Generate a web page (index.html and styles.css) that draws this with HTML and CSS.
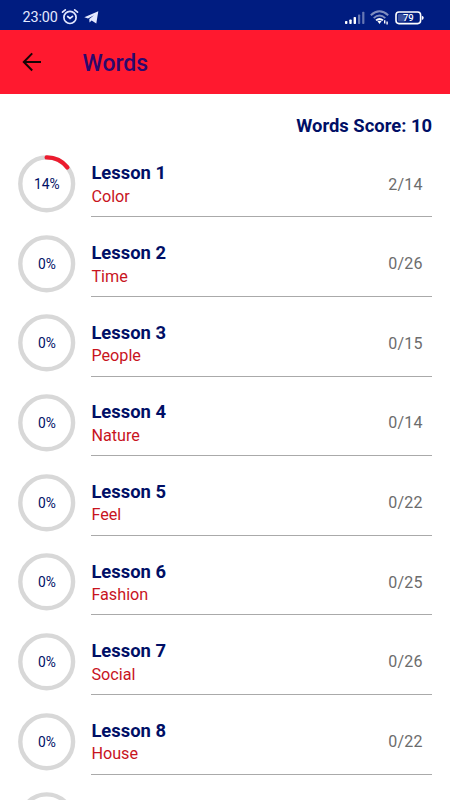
FILE: index.html
```
<!DOCTYPE html>
<html lang="en">
<head>
<meta charset="utf-8">
<title>Words</title>
<link rel="stylesheet" href="styles.css">
</head>
<body>
<div class="status">
  <span class="time">23:00</span>
  <svg class="alarm" width="18" height="18" viewBox="0 0 18 18" fill="none" stroke="#e4e9ff" stroke-width="1.7" stroke-linecap="round"><circle cx="9" cy="9.4" r="6.1"/><path d="M1.5 4.2 4.3 1.8M16.5 4.2 13.7 1.8M6.7 8.5 9 10.4 11.5 8.3"/></svg>
  <svg class="plane" width="15" height="13" viewBox="0 0 15 13" fill="#e4e9ff"><path d="M.3 6.3 14.3.3 12.3 12.4 7.6 9.4 5.5 11.6 5.3 8 10 4.2 4 7.6Z"/></svg>
  <svg class="signal" width="20" height="14" viewBox="0 0 20 14" fill="#fff"><rect y="10" width="2.4" height="3" rx=".7"/><rect x="4.3" y="8.5" width="2.4" height="4.5" rx=".7"/><rect x="8.6" y="6" width="2.4" height="7" rx=".7"/><g opacity=".4"><rect x="13" y="3.5" width="2.2" height="9.5" rx=".7"/><rect x="17.2" y=".8" width="2.2" height="12.2" rx=".7"/></g></svg>
  <svg class="wifi" width="20" height="15" viewBox="0 0 20 15" fill="none" stroke="#fff" stroke-width="1.9"><g opacity=".5"><path d="M.8 5.2Q9.5-2.6 18.2 5.2"/><path d="M3.7 8.1Q9.5 3 15.3 8.1"/></g><path d="M6 10.4Q9.5 7.4 13 10.4"/><path d="M7.2 10.8H11.8L9.5 14Z" fill="#fff" stroke="none"/><path d="M14.7 10.3V13.4M17.1 11.4V14.4" stroke-width="1.4"/></svg>
  <svg class="battery" width="30" height="14" viewBox="0 0 30 14"><rect x="1" y="1" width="24.6" height="11.6" rx="3" fill="none" stroke="#fff" stroke-width="1.6"/><rect x="3" y="3" width="7.5" height="7.6" rx="1" fill="#394f9f"/><path d="M26.8 4.7Q28.7 5 28.7 6.8T26.8 8.9Z" fill="#fff"/><text class="charge" x="13.3" y="10.2" text-anchor="middle">79</text></svg>
</div>
<header class="bar">
  <svg class="back" width="20" height="20" viewBox="0 0 20 20" fill="none" stroke="#170505" stroke-width="2"><path d="M19 10H2.2M10.2 1.4 1.8 10 10.2 18.5"/></svg>
  <h1>Words</h1>
</header>
<main>
  <p class="score">Words Score: 10</p>
  <ul class="list" id="list"></ul>
</main>
<script src="app.js"></script>
</body>
</html>
```
FILE: styles.css
```
* { box-sizing: border-box; margin: 0; padding: 0; }
html, body { height: 100%; overflow: hidden; }
body { background: #fff; font-family: Roboto, "Liberation Sans", sans-serif; color: #000f66; }
.status { display: flex; align-items: center; height: 30px; padding: 5px 25px 0 22.5px; background: #001c80; }
.time { font-size: 14.4px; line-height: 18px; color: #e4e9ff; letter-spacing: -.1px; width: 38px; padding-top: 1px; white-space: nowrap; }
.alarm { margin-top: -1px; }
.plane { margin-left: 5px; }
.signal { margin-left: auto; }
.wifi { margin-left: 5px; }
.battery { margin-left: 5px; }
.charge { font-size: 9.5px; font-weight: 500; fill: #fff; }
.bar { display: flex; align-items: center; height: 64px; padding-left: 22px; background: #ff192f; }
.back { margin-right: 40.5px; }
.bar h1 { font-size: 23px; font-weight: 500; line-height: 30px; color: #2c086c; padding-top: 4px; }
.score { height: 43.7px; padding: 20px 18px 0 0; text-align: right; font-size: 18.4px; line-height: 24px; font-weight: 700; }
.list { height: 662.3px; overflow: hidden; list-style: none; }
.row { display: flex; height: 79.63px; padding: 17.5px 18px 0; }
.ring { flex: none; width: 58px; height: 58px; margin-right: 15.4px; }
.ring circle, .ring path { fill: none; stroke-width: 4.4; stroke: #d8d8d8; }
.ring path { stroke: #ec1b2e; stroke-linecap: round; }
.ring text { font-size: 13.8px; fill: #000f66; }
.body { flex: 1; display: flex; justify-content: space-between; border-bottom: 1px solid #aaa; }
.name { font-size: 18.4px; line-height: 23px; font-weight: 700; padding-top: 6.2px; }
.topic { font-size: 16.2px; line-height: 22px; padding-top: 1.6px; color: #c8141e; }
.count { padding: 18.4px 9.3px 0 0; font-size: 16px; line-height: 22px; color: #6c6c6c; letter-spacing: .2px; }
```
FILE: app.js
```
const lessons = [
  ["Color", 2, 14], ["Time", 0, 26], ["People", 0, 15], ["Nature", 0, 14], ["Feel", 0, 22],
  ["Fashion", 0, 25], ["Social", 0, 26], ["House", 0, 22]
];

const ring = (share, label) => {
  const angle = share * 2 * Math.PI;
  const arc = share
    ? `<path d="M28.7 2.4A26.4 26.4 0 0 1 ${28.7 + 26.4 * Math.sin(angle)} ${28.8 - 26.4 * Math.cos(angle)}"/>`
    : "";
  const text = label ? `<text x="28.9" y="33.8" text-anchor="middle">${label}</text>` : "";
  return `<svg class="ring" viewBox="0 0 58 58"><circle cx="28.7" cy="28.8" r="26.4"/>${arc}${text}</svg>`;
};

document.getElementById("list").innerHTML = lessons.map(([topic, done, total], i) => `
  <li class="row">
    ${ring(done / total, Math.floor(done / total * 100) + "%")}
    <div class="body">
      <div><div class="name">Lesson ${i + 1}</div><div class="topic">${topic}</div></div>
      <div class="count">${done}/${total}</div>
    </div>
  </li>`).join("") + `<li class="row">${ring(0)}</li>`;
```
